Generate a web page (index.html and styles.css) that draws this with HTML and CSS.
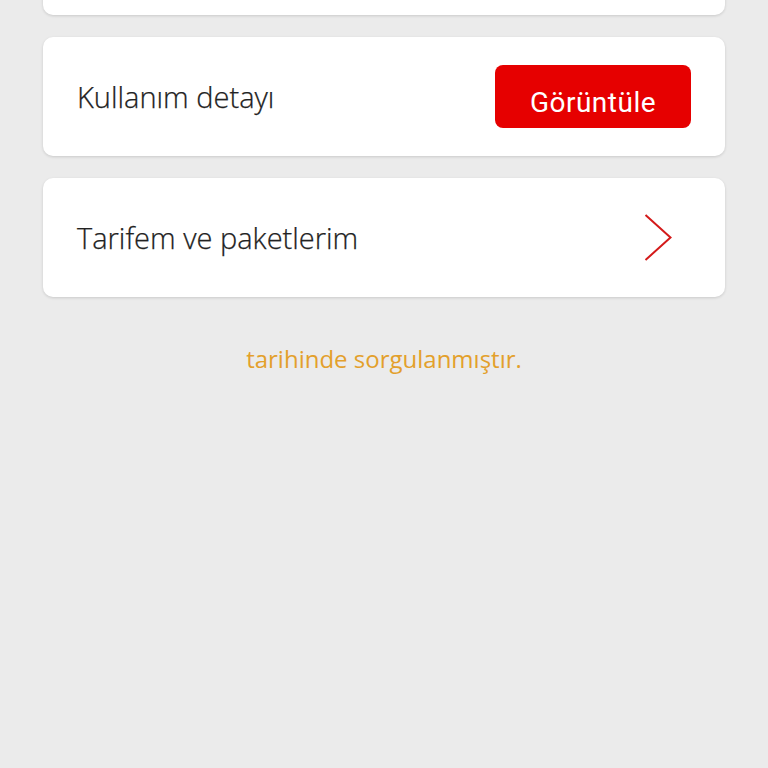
FILE: index.html
```html
<!DOCTYPE html>
<html lang="tr">
<head>
<meta charset="utf-8">
<link rel="stylesheet" href="styles.css">
</head>
<body>
<div class="page">
  <div class="card card-top"></div>
  <div class="card">
    <span class="label">Kullanım detayı</span>
    <button class="btn"><span class="btn-text">Görüntüle</span></button>
  </div>
  <div class="card">
    <span class="label">Tarifem ve paketlerim</span>
    <svg class="chevron" width="30" height="50" viewBox="0 0 30 50">
      <path d="M2.5 2 L27.5 24.5 L2.5 47" fill="none" stroke="#d41a1a" stroke-width="2"/>
    </svg>
  </div>
  <p class="note">tarihinde sorgulanmıştır.</p>
</div>
</body>
</html>
```
FILE: styles.css
```css
html, body {
  margin: 0;
  padding: 0;
  background: #ebebeb;
}
.page {
  display: flex;
  flex-direction: column;
  gap: 22px;
  padding: 0 43px;
  margin-top: -104px;
}
.card {
  height: 119px;
  background: #fff;
  border-radius: 10px;
  box-shadow: 0 1px 3px rgba(0,0,0,0.14);
  display: flex;
  align-items: center;
  justify-content: space-between;
  padding: 0 34px;
  box-sizing: border-box;
}
.label {
  font-family: "Open Sans", "Lato", sans-serif;
  font-weight: 300;
  font-size: 29px;
  color: #222;
  -webkit-text-stroke: 0.25px #222;
}
.btn {
  width: 196px;
  height: 63px;
  border: none;
  border-radius: 8px;
  background: #e60000;
  padding: 0;
  display: flex;
  align-items: flex-start;
  justify-content: center;
}
.btn-text {
  display: block;
  font-family: Roboto, "Liberation Sans", sans-serif;
  font-size: 28px;
  letter-spacing: 0.5px;
  color: #fff;
  line-height: 32px;
  margin-top: 22px;
  height: 25px;
  overflow: hidden;
}
.chevron {
  margin-right: 18px;
}
.note {
  margin: 23px 0 0;
  text-align: center;
  font-family: "Open Sans", "Lato", sans-serif;
  font-weight: 400;
  font-size: 24px;
  color: #e3a02b;
}
```
